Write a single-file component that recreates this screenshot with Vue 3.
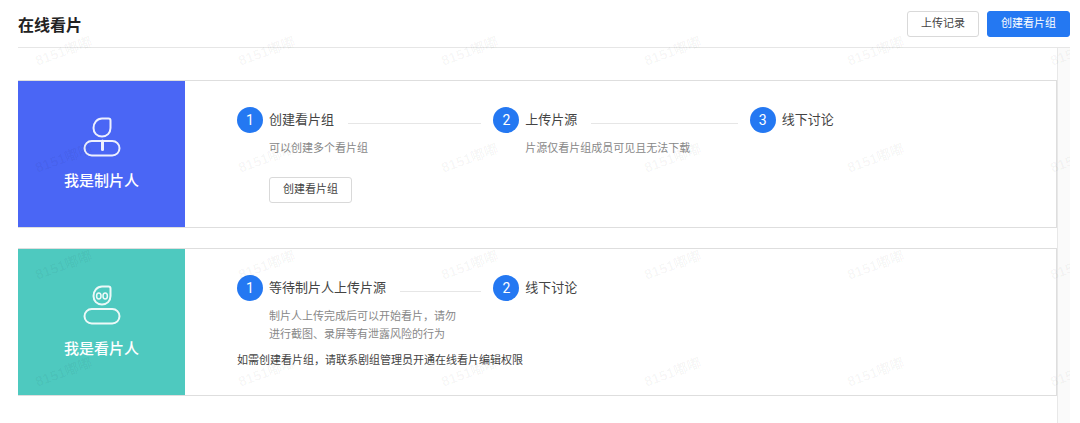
<template>
  <div class="page">
    <header class="page-header">
      <h1 class="page-title">在线看片</h1>
      <div class="header-actions">
        <button type="button" class="btn">上传记录</button>
        <button type="button" class="btn btn-primary">创建看片组</button>
      </div>
    </header>

    <div class="page-body">
      <main class="content">
        <section v-for="role in roles" :key="role.key" class="card">
          <div class="card-role" :class="role.key">
            <svg class="role-icon" width="38" height="40" viewBox="0 0 38 40" fill="none" stroke="currentColor" stroke-width="2">
              <path d="M19 1.500h6.500q2 0 2 2V11c0 5-3.500 8.500-8.500 8.500S10.500 16 10.500 11 14 1.500 19 1.500z" stroke-linejoin="round" />
              <rect x="1.500" y="24" width="35" height="14.500" rx="7.250" />
              <path v-if="role.key === 'producer'" d="M19.500 24v8.500" stroke-width="3" stroke-linecap="round" />
              <g v-else stroke-width="1.500">
                <ellipse cx="15.800" cy="11" rx="2.200" ry="3" />
                <ellipse cx="22.200" cy="11" rx="2.200" ry="3" />
              </g>
            </svg>
            <span class="role-name">{{ role.name }}</span>
          </div>

          <div class="card-main">
            <ol class="steps">
              <li v-for="(step, index) in role.steps" :key="step.title" class="step">
                <span class="step-num">{{ index + 1 }}</span>
                <div class="step-body">
                  <div class="step-head">
                    <h2 class="step-title">{{ step.title }}</h2>
                    <span v-if="index < role.steps.length - 1" class="step-line"></span>
                  </div>
                  <p v-if="step.desc" class="step-desc">{{ step.desc }}</p>
                  <button v-if="step.action" type="button" class="btn step-action">{{ step.action }}</button>
                </div>
              </li>
            </ol>
            <p v-if="role.note" class="note">{{ role.note }}</p>
          </div>
        </section>
      </main>
      <div class="scroll-track"></div>
    </div>

    <div class="watermark" aria-hidden="true">
      <div v-for="n in 24" :key="n" class="watermark-cell">
        <span>8151嘟嘟</span>
      </div>
    </div>
  </div>
</template>

<script setup>
const roles = [
  {
    key: 'producer',
    name: '我是制片人',
    steps: [
      { title: '创建看片组', desc: '可以创建多个看片组', action: '创建看片组' },
      { title: '上传片源', desc: '片源仅看片组成员可见且无法下载' },
      { title: '线下讨论' }
    ]
  },
  {
    key: 'viewer',
    name: '我是看片人',
    steps: [
      { title: '等待制片人上传片源', desc: '制片人上传完成后可以开始看片，请勿进行截图、录屏等有泄露风险的行为' },
      { title: '线下讨论' }
    ],
    note: '如需创建看片组，请联系剧组管理员开通在线看片编辑权限'
  }
]
</script>

<style>
body {
  margin: 0;
  background: #fff;
}
</style>

<style scoped>
.page {
  position: relative;
  display: flex;
  flex-direction: column;
  box-sizing: border-box;
  min-height: 100vh;
  padding: 0 10px 0 18px;
  font-family: Roboto, "Noto Sans CJK SC", sans-serif;
  font-size: 11px;
  color: #444;
}

.page-header {
  display: flex;
  align-items: center;
  justify-content: space-between;
  height: 47px;
  border-bottom: 1px solid #e6e6e6;
}

.page-title {
  margin: 0;
  font-size: 16px;
  font-weight: 700;
  color: #222;
}

.header-actions {
  display: flex;
  gap: 8px;
}

.btn {
  height: 26px;
  padding: 0 13px;
  border: 1px solid #d9d9d9;
  border-radius: 3px;
  background: #fff;
  font-family: inherit;
  font-size: 11px;
  line-height: 18px;
  color: #444;
  cursor: pointer;
}

.btn-primary {
  border-color: #2478f2;
  background: #2478f2;
  color: #fff;
}

.page-body {
  display: flex;
  flex: 1;
}

.content {
  display: flex;
  flex: 1;
  flex-direction: column;
  gap: 20px;
  padding: 32px 0 28px;
}

.scroll-track {
  width: 12px;
  border-left: 1px solid #e8e8e8;
  background: #fafafa;
}

.card {
  display: flex;
  box-sizing: border-box;
  min-height: 148px;
  border: 1px solid #dedede;
  border-left: 0;
}

.card-role {
  display: flex;
  flex-direction: column;
  align-items: center;
  justify-content: center;
  gap: 13px;
  width: 167px;
  color: #fff;
}

.producer {
  background: #4a66f5;
}

.viewer {
  background: #4ec9bf;
}

.role-icon {
  opacity: 0.9;
}

.role-name {
  font-size: 15px;
  font-weight: 500;
  line-height: 22px;
}

.card-main {
  flex: 1;
  padding: 26px 50px 24px 52px;
}

.steps {
  display: grid;
  grid-template-columns: repeat(3, 1fr);
  margin: 0;
  padding: 0;
  list-style: none;
}

.step {
  display: flex;
  gap: 6px;
}

.step-num {
  flex: none;
  width: 26px;
  height: 26px;
  border-radius: 50%;
  background: #2478f2;
  font-size: 14px;
  line-height: 26px;
  text-align: center;
  color: #fff;
}

.step-body {
  flex: 1;
}

.step-head {
  display: flex;
  align-items: center;
  gap: 14px;
  height: 26px;
  padding-right: 12px;
}

.step-title {
  margin: 0;
  font-size: 13px;
  font-weight: 400;
  line-height: 26px;
  color: #444;
}

.step-line {
  flex: 1;
  height: 1px;
  margin-top: 6px;
  background: #e6e6e6;
}

.step-desc {
  max-width: 192px;
  margin: 7px 0 0;
  line-height: 18px;
  color: #888;
}

.step-action {
  margin-top: 19px;
}

.note {
  margin: 8px 0 0;
  line-height: 18px;
}

.watermark {
  position: absolute;
  inset: 0 10px 0 0;
  display: grid;
  grid-template-columns: repeat(6, 203px);
  grid-auto-rows: 107px;
  overflow: hidden;
  pointer-events: none;
}

.watermark-cell {
  padding-left: 34px;
  font-family: "Liberation Sans", "Noto Sans CJK SC", sans-serif;
  font-size: 14px;
  font-weight: 700;
  line-height: 102px;
  color: rgba(0, 0, 0, 0.04);
}

.watermark-cell span {
  display: inline-block;
  transform: rotate(-20deg);
}
</style>
